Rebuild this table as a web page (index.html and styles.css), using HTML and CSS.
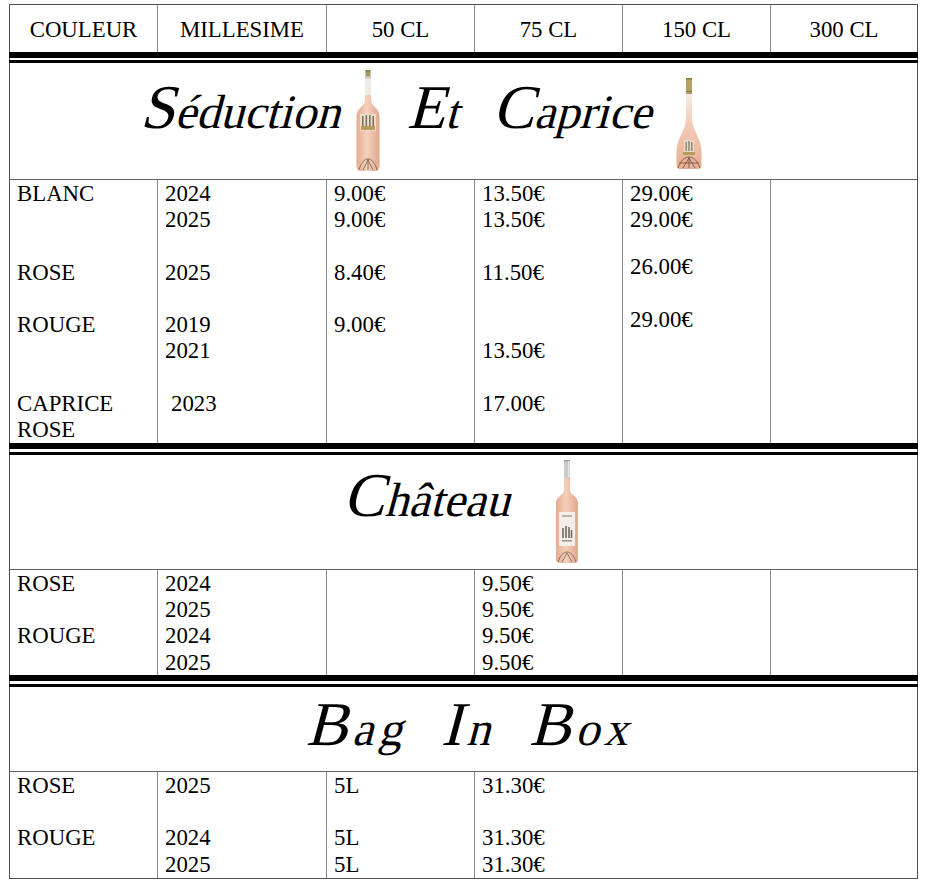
FILE: index.html
```html
<!DOCTYPE html>
<html lang="fr">
<head>
<meta charset="utf-8">
<title>Tarifs</title>
<link rel="stylesheet" href="styles.css">
</head>
<body>
<div class="sheet">
  <div class="cell head first">COULEUR</div>
  <div class="cell head">MILLESIME</div>
  <div class="cell head">50 CL</div>
  <div class="cell head">75 CL</div>
  <div class="cell head">150 CL</div>
  <div class="cell head">300 CL</div>

  <div class="sep sep-a"></div>

  <div class="title t1">
    <span class="script s-seduction"><span class="cap">S</span>éduction</span>
    <svg class="bottle b1" width="26" height="102" viewBox="0 0 26 102">
      <defs>
        <linearGradient id="pk1" x1="0" x2="1" y1="0" y2="0">
          <stop offset="0" stop-color="#e4ab8e"/>
          <stop offset="0.45" stop-color="#f5d1bc"/>
          <stop offset="1" stop-color="#e0a78b"/>
        </linearGradient>
      </defs>
      <path d="M10 24 L10 30 C10 36 2 38 1.5 46 L1.5 96 C1.5 99 3 101 6 101 L20 101 C23 101 24.5 99 24.5 96 L24.5 46 C24 38 16 36 16 30 L16 24 Z" fill="url(#pk1)"/>
      <rect x="10" y="6" width="6" height="19" fill="#efece6"/>
      <rect x="10" y="6" width="6" height="3" fill="#d8d2c4"/>
      <rect x="10.5" y="0" width="5" height="6.5" fill="#a4996a"/>
      <rect x="10.5" y="0" width="5" height="1.5" fill="#8a7f52"/>
      <rect x="5" y="44" width="16" height="17" fill="#ede4d8" opacity="0.8"/>
      <rect x="7" y="46" width="1.6" height="10" fill="#7c7462"/>
      <rect x="10.5" y="45" width="1.6" height="11" fill="#7c7462"/>
      <rect x="14" y="45" width="1.6" height="11" fill="#7c7462"/>
      <rect x="17.4" y="46" width="1.6" height="10" fill="#7c7462"/>
      <rect x="6" y="56" width="14" height="4" fill="#b59a5a"/>
      <path d="M4 100 C6 92 10 89 13 89 C16 89 20 92 22 100 M8 100 L13 90 L18 100 M13 89 L13 100" fill="none" stroke="#7a5a4a" stroke-width="0.8"/>
    </svg>
    <span class="script s-caprice"><span class="cap">E</span>t <span class="cap">C</span>aprice</span>
    <svg class="bottle b2" width="28" height="92" viewBox="0 0 28 92">
      <defs>
        <linearGradient id="pk2" x1="0" x2="0" y1="0" y2="1">
          <stop offset="0" stop-color="#f4eee9"/>
          <stop offset="0.35" stop-color="#f3cfbb"/>
          <stop offset="1" stop-color="#e8ae92"/>
        </linearGradient>
      </defs>
      <path d="M11 15 L11 40 C11 52 2 60 1.5 72 L1.5 88 C1.5 90 3 91 5 91 L23 91 C25 91 26.5 90 26.5 88 L26.5 72 C26 60 17 52 17 40 L17 15 Z" fill="url(#pk2)"/>
      <rect x="11" y="0" width="6" height="16" fill="#b7a064"/>
      <rect x="11" y="0" width="6" height="1.5" fill="#8c7a46"/>
      <rect x="11" y="13" width="6" height="1.2" fill="#8c7a46"/>
      <rect x="9" y="62" width="10" height="14" fill="#e9e0d6" opacity="0.8"/>
      <rect x="10.5" y="64" width="1.3" height="9" fill="#857a68"/>
      <rect x="13.3" y="63" width="1.3" height="10" fill="#857a68"/>
      <rect x="16.1" y="64" width="1.3" height="9" fill="#857a68"/>
      <rect x="8" y="74" width="12" height="3" fill="#b89c5e"/>
      <path d="M3 90 C6 82 10 79 14 79 C18 79 22 82 25 90 M8 90 L14 80 L20 90 M14 79 L14 90 M4 85 L24 85" fill="none" stroke="#6e4f40" stroke-width="0.8"/>
    </svg>
  </div>

  <div class="cell data first">
    <div class="ln">BLANC</div>
    <div class="ln"></div>
    <div class="ln"></div>
    <div class="ln">ROSE</div>
    <div class="ln"></div>
    <div class="ln">ROUGE</div>
    <div class="ln"></div>
    <div class="ln"></div>
    <div class="ln">CAPRICE</div>
    <div class="ln">ROSE</div>
  </div>
  <div class="cell data">
    <div class="ln">2024</div>
    <div class="ln">2025</div>
    <div class="ln"></div>
    <div class="ln">2025</div>
    <div class="ln"></div>
    <div class="ln">2019</div>
    <div class="ln">2021</div>
    <div class="ln"></div>
    <div class="ln indent">2023</div>
  </div>
  <div class="cell data">
    <div class="ln">9.00€</div>
    <div class="ln">9.00€</div>
    <div class="ln"></div>
    <div class="ln">8.40€</div>
    <div class="ln"></div>
    <div class="ln">9.00€</div>
  </div>
  <div class="cell data">
    <div class="ln">13.50€</div>
    <div class="ln">13.50€</div>
    <div class="ln"></div>
    <div class="ln">11.50€</div>
    <div class="ln"></div>
    <div class="ln"></div>
    <div class="ln">13.50€</div>
    <div class="ln"></div>
    <div class="ln">17.00€</div>
  </div>
  <div class="cell data">
    <div class="ln">29.00€</div>
    <div class="ln">29.00€</div>
    <div class="gap-s"></div>
    <div class="ln">26.00€</div>
    <div class="gap-l"></div>
    <div class="ln">29.00€</div>
  </div>
  <div class="cell data"></div>

  <div class="sep"></div>

  <div class="title t2">
    <span class="script s-chateau"><span class="cap">C</span>hâteau</span>
    <svg class="bottle b3" width="26" height="104" viewBox="0 0 26 104">
      <defs>
        <linearGradient id="pk3" x1="0" x2="1" y1="0" y2="0">
          <stop offset="0" stop-color="#e3ad91"/>
          <stop offset="0.45" stop-color="#f4cfba"/>
          <stop offset="1" stop-color="#dfa88c"/>
        </linearGradient>
      </defs>
      <path d="M10 16 L10 30 C10 35 2 36 2 43 L2 99 C2 102 3.5 103 6 103 L20 103 C22.5 103 24 102 24 99 L24 43 C24 36 16 35 16 30 L16 16 Z" fill="url(#pk3)"/>
      <rect x="10" y="0" width="6" height="18" fill="#c9cacb"/>
      <rect x="10" y="0" width="6" height="1.5" fill="#9d9fa1"/>
      <rect x="14" y="1" width="1.5" height="16" fill="#e4e5e6"/>
      <rect x="5" y="52" width="16" height="34" fill="#f3eee9"/>
      <rect x="8" y="55" width="10" height="2" fill="#b8b2aa"/>
      <path d="M9 78 L9 68 M12 78 L12 66 M15 78 L15 67 M17.5 78 L17.5 70" stroke="#6f6a60" stroke-width="1.6"/>
      <rect x="8" y="80" width="10" height="1.5" fill="#9a948a"/>
      <path d="M4 102 C6 95 10 92 13 92 C16 92 20 95 22 102 M8 102 L13 93 L18 102" fill="none" stroke="#7a5a4a" stroke-width="0.8"/>
    </svg>
  </div>

  <div class="cell data first">
    <div class="ln">ROSE</div>
    <div class="ln"></div>
    <div class="ln">ROUGE</div>
  </div>
  <div class="cell data">
    <div class="ln">2024</div>
    <div class="ln">2025</div>
    <div class="ln">2024</div>
    <div class="ln">2025</div>
  </div>
  <div class="cell data"></div>
  <div class="cell data">
    <div class="ln">9.50€</div>
    <div class="ln">9.50€</div>
    <div class="ln">9.50€</div>
    <div class="ln">9.50€</div>
  </div>
  <div class="cell data"></div>
  <div class="cell data"></div>

  <div class="sep"></div>

  <div class="title t3">
    <span class="script s-bag"><span class="cap">B</span>ag <span class="cap">I</span>n <span class="cap">B</span>ox</span>
  </div>

  <div class="cell data first">
    <div class="ln">ROSE</div>
    <div class="ln"></div>
    <div class="ln">ROUGE</div>
  </div>
  <div class="cell data">
    <div class="ln">2025</div>
    <div class="ln"></div>
    <div class="ln">2024</div>
    <div class="ln">2025</div>
  </div>
  <div class="cell data">
    <div class="ln">5L</div>
    <div class="ln"></div>
    <div class="ln">5L</div>
    <div class="ln">5L</div>
  </div>
  <div class="cell data span-rest">
    <div class="ln">31.30€</div>
    <div class="ln"></div>
    <div class="ln">31.30€</div>
    <div class="ln">31.30€</div>
  </div>
</div>
</body>
</html>
```

FILE: styles.css
```css
html, body {
  margin: 0;
  padding: 0;
  background: #ffffff;
}

body {
  font-family: "Liberation Serif", "Times New Roman", serif;
  font-size: 22.8px;
  color: #000000;
}

.sheet {
  margin: 4px 0 0 9px;
  width: 907px;
  border: 1px solid #505050;
  display: grid;
  grid-template-columns: 147px 169px 148px 148px 148px 147px;
  grid-template-rows: 47px 11px 116px 264px 12px 114px 106px 12px 84px 107px;
}

.cell {
  border-left: 1px solid #8a8a8a;
  box-sizing: border-box;
}

.cell.first {
  border-left: none;
}

.head {
  display: flex;
  align-items: center;
  justify-content: center;
  padding-top: 2px;
}

.data {
  padding: 1px 7px 0 7px;
  border-top: 1px solid #606060;
}

.ln {
  height: 26.2px;
  line-height: 26.2px;
  white-space: nowrap;
}

.indent {
  padding-left: 6px;
}

.gap-s {
  height: 20.5px;
}

.gap-l {
  height: 27px;
}

.span-rest {
  grid-column: 4 / -1;
}

.sep {
  grid-column: 1 / -1;
  border-top: 6px solid #000000;
  border-bottom: 3px solid #000000;
  height: 3px;
  margin: 0 -1px;
}

.sep-a {
  height: 2px;
}

.title {
  grid-column: 1 / -1;
  display: flex;
  align-items: flex-start;
}

.script {
  display: inline-block;
  font-family: "Liberation Serif", "Times New Roman", serif;
  font-style: normal;
  font-size: 48px;
  line-height: 56px;
  white-space: nowrap;
  transform: skewX(-15deg);
}

.cap {
  font-size: 1.3em;
  line-height: 0;
}

.bottle {
  display: block;
  flex: none;
}

.t1 {
  padding-left: 134px;
}

.s-seduction {
  margin-top: 21px;
}

.b1 {
  margin-top: 7px;
  margin-left: 11px;
}

.s-caprice {
  margin-top: 21px;
  margin-left: 30px;
  word-spacing: 22px;
}

.b2 {
  margin-top: 15px;
  margin-left: 20px;
}

.t2 {
  justify-content: center;
  gap: 40px;
}

.s-chateau {
  margin-top: 17px;
}

.b3 {
  margin-top: 5px;
}

.t3 {
  justify-content: center;
  padding-left: 20px;
}

.s-bag {
  margin-top: 14px;
  letter-spacing: 4.5px;
  word-spacing: 18px;
}
```
